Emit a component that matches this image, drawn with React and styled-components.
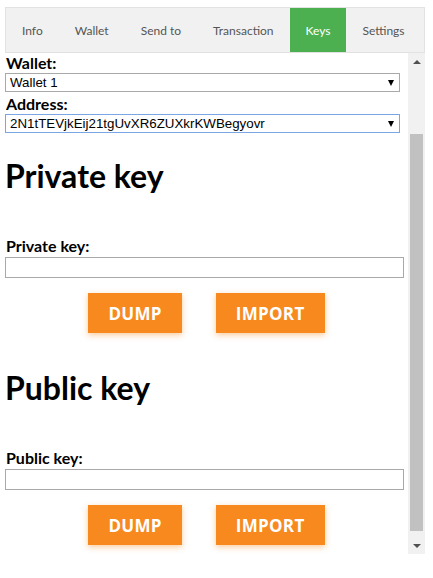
import { useState } from 'react';
import styled, { createGlobalStyle } from 'styled-components';

const GlobalStyle = createGlobalStyle`
  body {
    margin: 0;
    background: #ffffff;
    font-family: "Lato", "Open Sans", sans-serif;
  }
`;

const Page = styled.div`
  width: 420px;
  padding: 7px 0 0 5px;
`;

const TabBar = styled.nav`
  display: flex;
  height: 44px;
  background: #f1f1f1;
  border: 1px solid #e2e2e2;
`;

const Tab = styled.button`
  flex-shrink: 0;
  padding: 0 16px;
  border: none;
  background: ${({ $active }) => ($active ? '#4caf50' : 'transparent')};
  color: ${({ $active }) => ($active ? '#ffffff' : '#555555')};
  font-family: "Lato", "Open Sans", sans-serif;
  font-size: 12px;
  white-space: nowrap;
  cursor: pointer;
`;

const Pane = styled.div`
  display: flex;
  height: 501px;
`;

const Content = styled.div`
  flex: 1;
  min-width: 0;
  overflow: hidden;
`;

/* drawn scrollbar: the page is shown part-way down the pane */
const ScrollTrack = styled.div`
  display: flex;
  flex-direction: column;
  width: 17px;
  background: #f1f1f1;
`;

const ScrollArrow = styled.div`
  display: flex;
  align-items: center;
  justify-content: center;
  height: 17px;

  &::before {
    content: '';
    border-left: 4px solid transparent;
    border-right: 4px solid transparent;
    ${({ $dir }) =>
      $dir === 'up' ? 'border-bottom: 4px solid #505050;' : 'border-top: 4px solid #505050;'}
  }
`;

const ScrollThumb = styled.div`
  height: 397px;
  margin: 64px 2px 6px;
  background: #c1c1c1;
`;

const Heading = styled.h1`
  margin: 23px 0 40px;
  font-size: 32px;
  line-height: 40px;
  font-weight: 700;
  color: #000000;
`;

const FieldLabel = styled.label`
  display: block;
  font-size: 16px;
  line-height: 20px;
  font-weight: 700;
  color: #000000;
  padding-left: 1px;
`;

const SelectWrap = styled.div`
  position: relative;
  width: calc(100% - 8px);

  &::after {
    content: '';
    position: absolute;
    right: 6px;
    top: 7px;
    border-left: 3.5px solid transparent;
    border-right: 3.5px solid transparent;
    border-top: 6px solid #000000;
    pointer-events: none;
  }
`;

const Select = styled.select`
  appearance: none;
  display: block;
  width: 100%;
  height: 19px;
  margin: 0 0 2px;
  padding: 0 0 0 4px;
  border: 1px solid ${({ $focused }) => ($focused ? '#7aa6e6' : '#a9a9a9')};
  border-radius: 0;
  background: #ffffff;
  color: #000000;
  font-family: "Liberation Sans", Arial, sans-serif;
  font-size: 13.33px;
  outline: none;
`;

const Section = styled.section`
  padding-bottom: 12px;
`;

const TextInput = styled.input`
  display: block;
  width: calc(100% - 4px);
  height: 21px;
  margin: 1px 0 0;
  padding: 0 4px;
  box-sizing: border-box;
  border: 1px solid #a9a9a9;
  font-family: "Liberation Sans", Arial, sans-serif;
  font-size: 13.33px;
  outline: none;
`;

const ButtonRow = styled.div`
  display: flex;
  justify-content: center;
  gap: 34px;
  margin-top: 15px;
`;

const ActionButton = styled.button`
  height: 40px;
  padding: 0 20px;
  border: none;
  background: #f7891f;
  color: #ffffff;
  font-family: "Open Sans", sans-serif;
  font-weight: 700;
  font-size: 17px;
  letter-spacing: 0.3px;
  box-shadow: 0 2px 6px rgba(247, 137, 31, 0.45);
  cursor: pointer;
`;

const tabs = ['Info', 'Wallet', 'Send to', 'Transaction', 'Keys', 'Settings'];

const KeySection = ({ title, label }) => (
  <Section>
    <Heading>{title}</Heading>
    <FieldLabel>{label}</FieldLabel>
    <TextInput type="text" />
    <ButtonRow>
      <ActionButton>DUMP</ActionButton>
      <ActionButton>IMPORT</ActionButton>
    </ButtonRow>
  </Section>
);

const App = () => {
  const [activeTab, setActiveTab] = useState('Keys');

  return (
    <Page>
      <GlobalStyle />
      <TabBar>
        {tabs.map((tab) => (
          <Tab key={tab} $active={tab === activeTab} onClick={() => setActiveTab(tab)}>
            {tab}
          </Tab>
        ))}
      </TabBar>
      <Pane>
        <Content>
          <FieldLabel>Wallet:</FieldLabel>
          <SelectWrap>
            <Select defaultValue="w1">
              <option value="w1">Wallet 1</option>
              <option value="w2">Wallet 2</option>
            </Select>
          </SelectWrap>
          <FieldLabel>Address:</FieldLabel>
          <SelectWrap>
            <Select $focused defaultValue="a1">
              <option value="a1">2N1tTEVjkEij21tgUvXR6ZUXkrKWBegyovr</option>
            </Select>
          </SelectWrap>
          <KeySection title="Private key" label="Private key:" />
          <KeySection title="Public key" label="Public key:" />
        </Content>
        <ScrollTrack>
          <ScrollArrow $dir="up" />
          <ScrollThumb />
          <ScrollArrow $dir="down" />
        </ScrollTrack>
      </Pane>
    </Page>
  );
};

export default App;
